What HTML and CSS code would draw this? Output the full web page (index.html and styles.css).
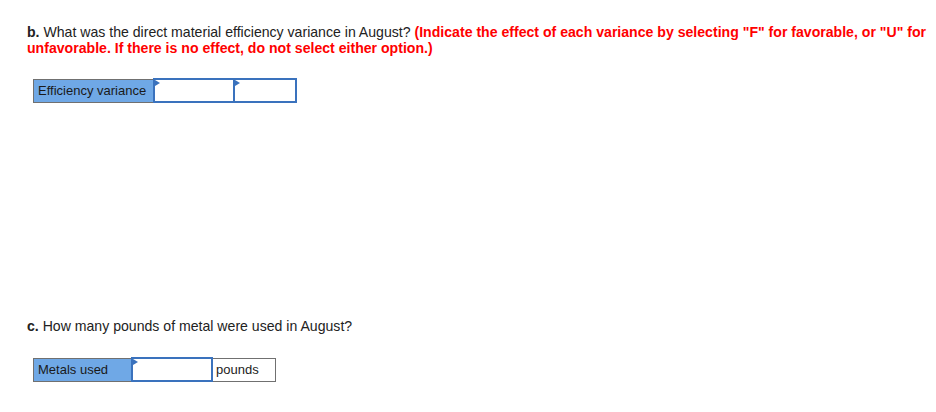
FILE: index.html
```html
<!DOCTYPE html>
<html>
<head>
<meta charset="utf-8">
<link rel="stylesheet" href="styles.css">
</head>
<body>
<div class="page">
  <section class="part part-b">
    <p class="question"><b>b.</b> What was the direct material efficiency variance in August? <span class="instr">(Indicate the effect of each variance by selecting "F" for favorable, or "U" for unfavorable. If there is no effect, do not select either option.)</span></p>
    <table class="grid grid-b">
      <tr>
        <td class="label lb">Efficiency variance</td>
        <td class="input w80"><span class="flag"></span></td>
        <td class="input w62"><span class="flag"></span></td>
      </tr>
    </table>
  </section>
  <section class="part part-c">
    <p class="question"><b>c.</b> How many pounds of metal were used in August?</p>
    <table class="grid grid-c">
      <tr>
        <td class="label lc">Metals used</td>
        <td class="input w80"><span class="flag"></span></td>
        <td class="unit">pounds</td>
      </tr>
    </table>
  </section>
</div>
</body>
</html>
```
FILE: styles.css
```css
html, body {
  margin: 0;
  padding: 0;
  background: #fff;
}
body {
  font-family: "Liberation Sans", Arial, sans-serif;
  font-size: 14.1px;
  color: #222;
}
.page {
  padding: 24px 6px 0 27px;
}
.question {
  margin: 0;
  line-height: 16px;
}
.instr {
  color: #ff0000;
  font-weight: bold;
}
.grid {
  border-collapse: collapse;
  border: 1px solid #707070;
  margin-left: 6px;
  font-size: 13px;
}
.grid td {
  padding: 0;
  height: 22px;
  vertical-align: middle;
}
.grid-b {
  margin-top: 22px;
}
.part-c {
  margin-top: 215px;
}
.grid-c {
  margin-top: 23px;
}
.label {
  background: #6fa8e6;
  border-right: 1px solid #707070;
  color: #1a1a1a;
  white-space: nowrap;
}
.grid td.lb {
  padding: 0 7px 0 4px;
}
.grid td.lc {
  padding: 0 4px;
  width: 89px;
}
.input {
  position: relative;
  background: #fff;
  border: 2px solid #3a72bd;
  box-sizing: border-box;
}
.w80 { width: 80px; min-width: 80px; }
.w62 { width: 62px; min-width: 62px; }
.flag {
  position: absolute;
  left: 0;
  top: 0;
  width: 0;
  height: 0;
  border-top: 3px solid transparent;
  border-bottom: 3px solid transparent;
  border-left: 5px solid #3a72bd;
}
.grid td.unit {
  border-left: 1px solid #707070;
  padding: 0 3px;
  width: 56px;
}
```
